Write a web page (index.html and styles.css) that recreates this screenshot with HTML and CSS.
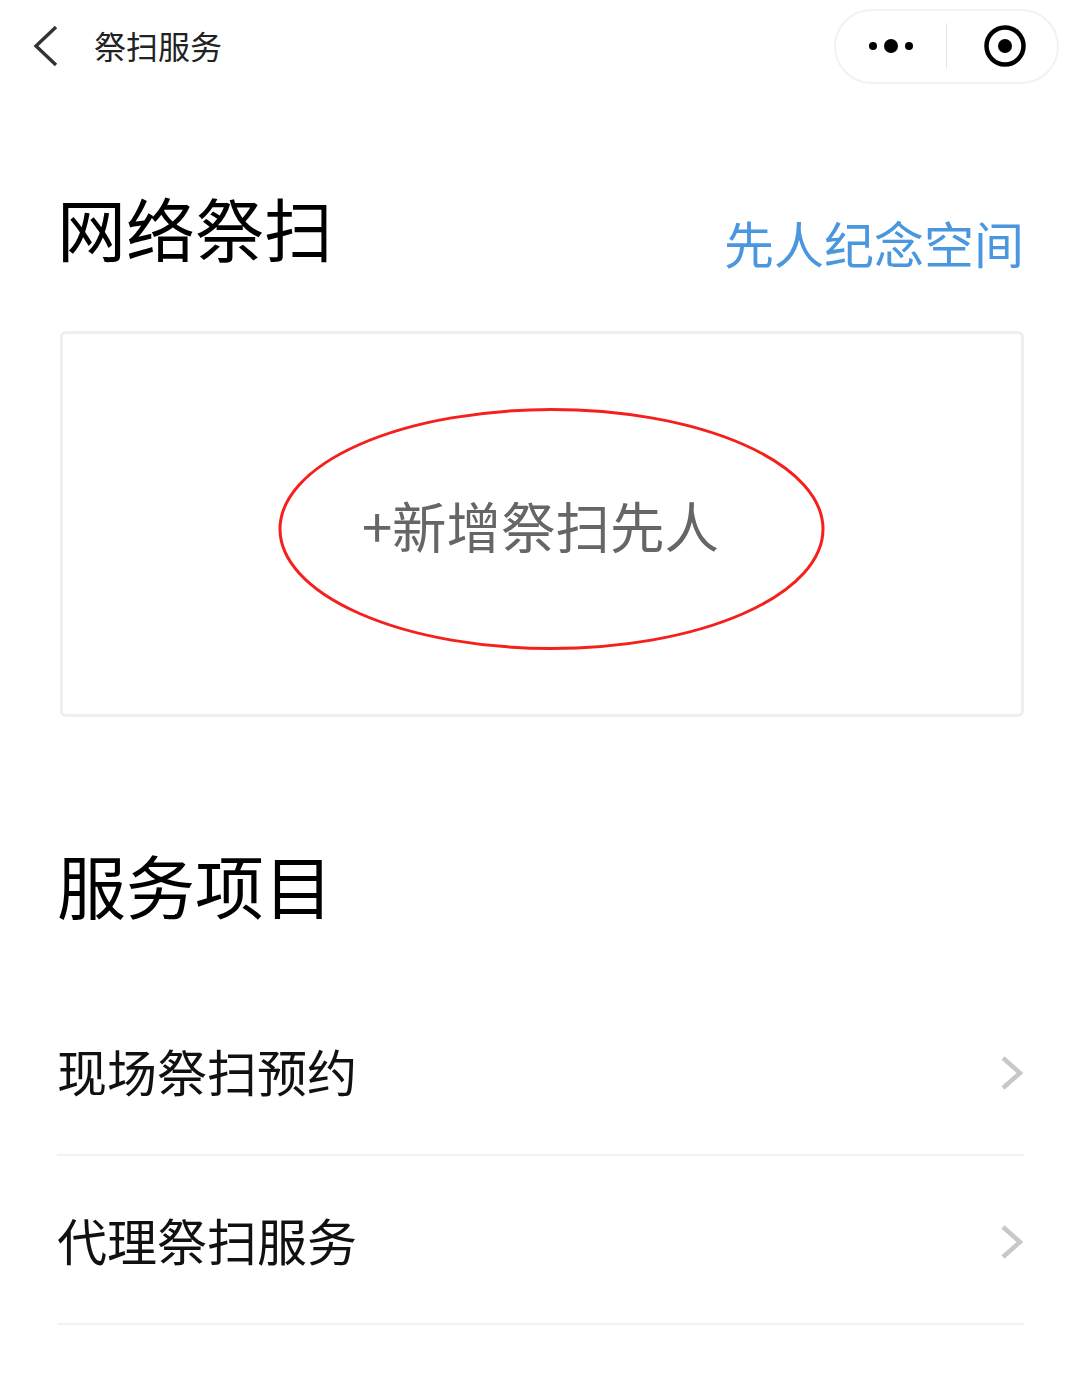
FILE: index.html
```html
<!DOCTYPE html>
<html lang="zh-CN">
<head>
<meta charset="utf-8">
<title>祭扫服务</title>
<link rel="stylesheet" href="styles.css">
</head>
<body>
<header class="nav">
  <div class="nav-left">
    <svg class="back" width="26" height="42" viewBox="0 0 26 42"><path d="M23 2 L3 21 L23 40" fill="none" stroke="#333" stroke-width="3.4"/></svg>
    <span class="nav-title">祭扫服务</span>
  </div>
  <div class="capsule">
    <div class="capsule-cell">
      <svg width="46" height="16" viewBox="0 0 46 16"><circle cx="5" cy="8" r="4" fill="#000"/><circle cx="23" cy="8" r="7" fill="#000"/><circle cx="41" cy="8" r="4" fill="#000"/></svg>
    </div>
    <div class="capsule-sep"></div>
    <div class="capsule-cell capsule-cell-record">
      <svg width="42" height="42" viewBox="0 0 42 42"><circle cx="21" cy="21" r="18.5" fill="none" stroke="#000" stroke-width="4.5"/><circle cx="21" cy="21" r="7" fill="#000"/></svg>
    </div>
  </div>
</header>
<main class="content">
  <div class="section-head">
    <h1 class="heading">网络祭扫</h1>
    <a class="link">先人纪念空间</a>
  </div>
  <div class="card">
    <span class="add-text">+新增祭扫先人</span>
    <svg class="mark" width="548" height="244" viewBox="0 0 548 244"><ellipse cx="274.5" cy="122" rx="271.5" ry="119.5" fill="none" stroke="#f5201c" stroke-width="3"/></svg>
  </div>
  <h1 class="heading heading-services">服务项目</h1>
  <ul class="list">
    <li class="row"><span class="row-label">现场祭扫预约</span><svg width="24" height="36" viewBox="0 0 24 36"><path d="M3 3 L20 18 L3 33" fill="none" stroke="#c8c8c8" stroke-width="4.5"/></svg></li>
    <li class="row"><span class="row-label">代理祭扫服务</span><svg width="24" height="36" viewBox="0 0 24 36"><path d="M3 3 L20 18 L3 33" fill="none" stroke="#c8c8c8" stroke-width="4.5"/></svg></li>
  </ul>
</main>
</body>
</html>
```
FILE: styles.css
```css
* { box-sizing: border-box; }
html, body { margin: 0; padding: 0; background: #fff; }
body {
  width: 1080px;
  height: 1395px;
  overflow: hidden;
  font-family: "Noto Sans CJK SC", "Noto Sans", sans-serif;
  font-weight: 400;
  color: #111;
}
.nav {
  display: flex;
  justify-content: space-between;
  align-items: center;
  height: 92px;
  padding: 0 21px 0 33px;
}
.nav-left { display: flex; align-items: center; gap: 35px; }
.back { display: block; }
.nav-title { font-size: 32px; line-height: 44px; color: #222; margin-top: -2px; }
.capsule {
  display: flex;
  align-items: center;
  width: 225px;
  height: 75px;
  border: 2px solid #f2f2f2;
  border-radius: 38px;
}
.capsule-cell { flex: 0 0 110px; display: flex; justify-content: center; align-items: center; }
.capsule-cell-record { padding-left: 6px; }
.capsule-sep { width: 1px; height: 46px; background: #e6e6e6; }
.content { padding: 0 56px 0 57px; }
.section-head {
  display: flex;
  justify-content: space-between;
  align-items: flex-start;
  padding: 87px 0 0 0;
  height: 239px;
}
.heading { margin: 0; font-size: 69px; line-height: 96px; font-weight: 400; color: #000; }
.link { font-size: 50px; line-height: 70px; color: #4a97e0; margin-top: 28px; }
.card {
  position: relative;
  display: flex;
  justify-content: center;
  align-items: center;
  margin-left: 3px;
  height: 386px;
  width: 964px;
  border: 3px solid #efefef;
  border-radius: 6px;
}
.add-text { font-size: 54.5px; line-height: 76px; color: #666; margin-left: -3px; margin-top: 2px; }
.mark { position: absolute; left: 214px; top: 73px; }
.heading-services { margin: 119px 0 0 0; }
.list { list-style: none; margin: 55px 0 0; padding: 0; }
.row {
  display: flex;
  justify-content: space-between;
  align-items: center;
  height: 169px;
  border-bottom: 2px solid #f2f2f2;
  font-size: 50px;
  color: #111;
}
.row-label { margin-top: -2px; }
.row svg { display: block; margin-top: 4px; }
```
